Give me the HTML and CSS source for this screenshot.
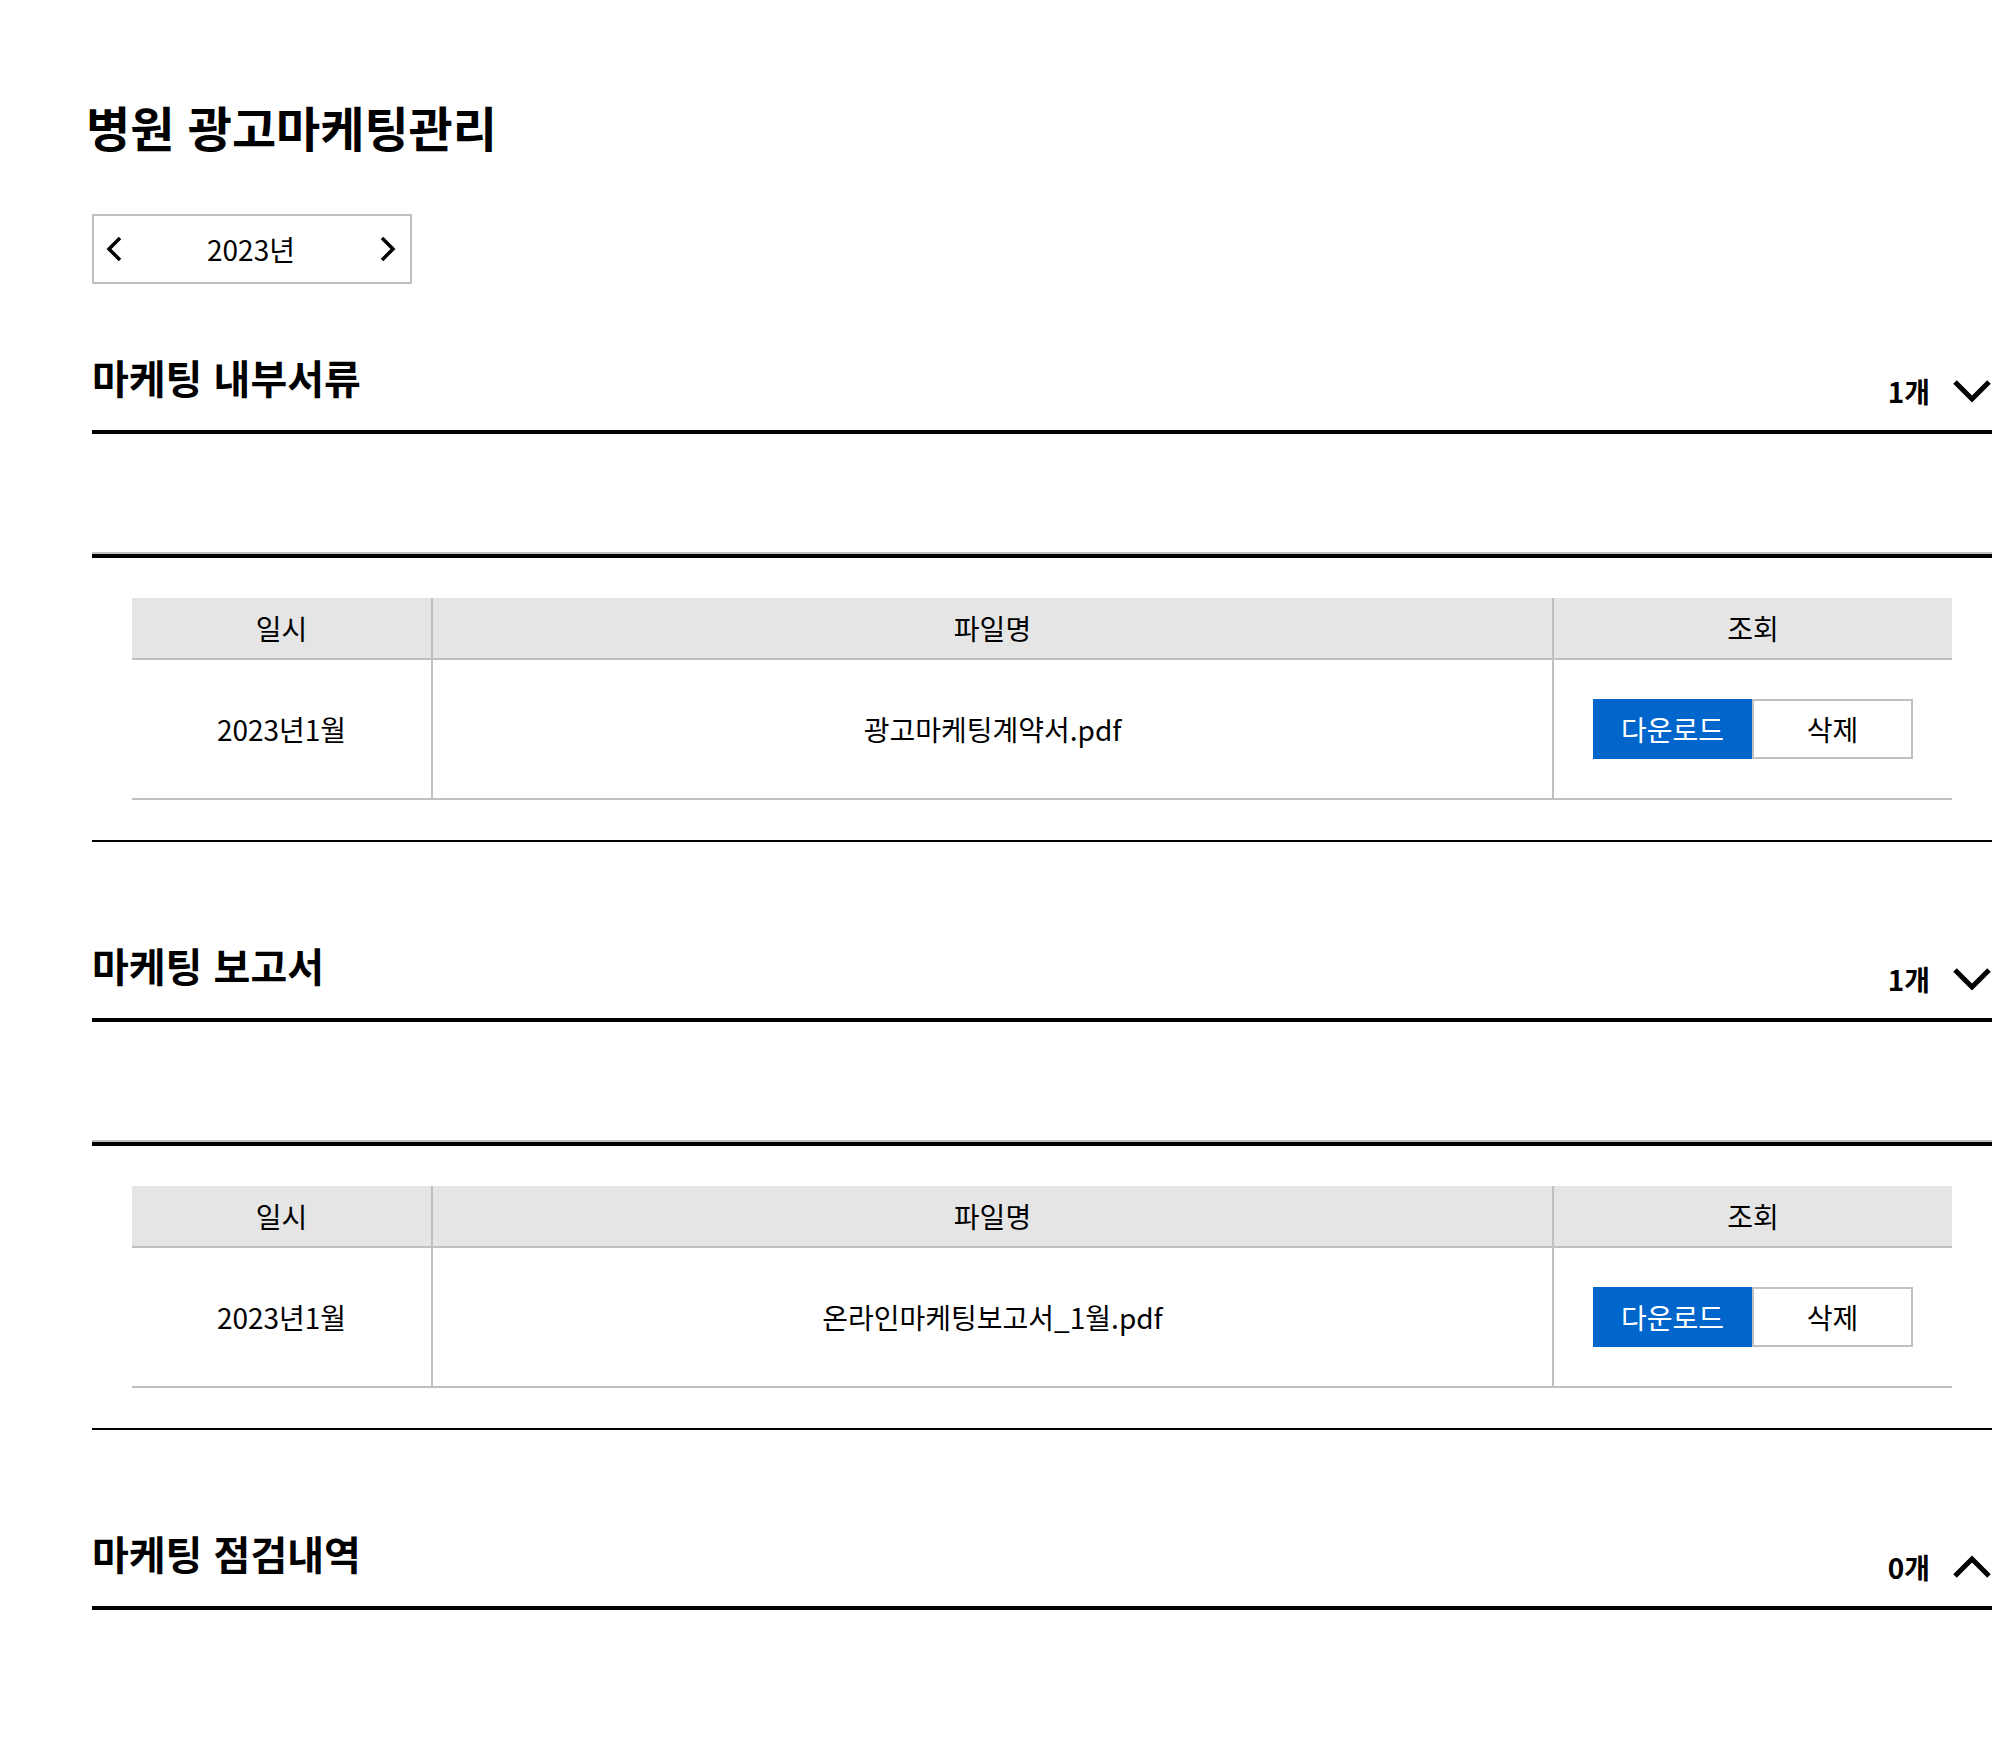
FILE: index.html
```html
<!DOCTYPE html>
<html lang="ko">
<head>
  <meta charset="UTF-8" />
  <meta name="viewport" content="width=device-width, initial-scale=1.0"/>
  <title>병원 광고마케팅관리</title>
  <link rel="stylesheet" href="styles.css">
</head>
<body>
  <div class="page">
    <h1 class="page-title">병원 광고마케팅관리</h1>

    <div class="year-nav">
      <button class="year-arrow" type="button" aria-label="이전 연도">
        <svg width="20" height="26" viewBox="0 0 20 26"><path d="M16 2 L5 13 L16 24" fill="none" stroke="#000" stroke-width="3.5"/></svg>
      </button>
      <span class="year-label">2023년</span>
      <button class="year-arrow" type="button" aria-label="다음 연도">
        <svg width="20" height="26" viewBox="0 0 20 26"><path d="M4 2 L15 13 L4 24" fill="none" stroke="#000" stroke-width="3.5"/></svg>
      </button>
    </div>

    <section class="section">
      <div class="section-head">
        <h2 class="section-title">마케팅 내부서류</h2>
        <div class="section-meta">
          <span class="count">1개</span>
          <svg class="toggle" width="40" height="24" viewBox="0 0 40 24"><path d="M3 3 L20 20 L37 3" fill="none" stroke="#000" stroke-width="5"/></svg>
        </div>
      </div>
      <div class="section-gap"></div>
      <div class="section-body">
        <table class="file-table">
          <colgroup>
            <col class="col-date">
            <col class="col-name">
            <col class="col-action">
          </colgroup>
          <thead>
            <tr><th>일시</th><th>파일명</th><th>조회</th></tr>
          </thead>
          <tbody>
            <tr>
              <td>2023년1월</td>
              <td>광고마케팅계약서.pdf</td>
              <td>
                <div class="btn-group">
                  <button class="btn btn-download" type="button">다운로드</button>
                  <button class="btn btn-delete" type="button">삭제</button>
                </div>
              </td>
            </tr>
          </tbody>
        </table>
      </div>
    </section>

    <section class="section">
      <div class="section-head">
        <h2 class="section-title">마케팅 보고서</h2>
        <div class="section-meta">
          <span class="count">1개</span>
          <svg class="toggle" width="40" height="24" viewBox="0 0 40 24"><path d="M3 3 L20 20 L37 3" fill="none" stroke="#000" stroke-width="5"/></svg>
        </div>
      </div>
      <div class="section-gap"></div>
      <div class="section-body">
        <table class="file-table">
          <colgroup>
            <col class="col-date">
            <col class="col-name">
            <col class="col-action">
          </colgroup>
          <thead>
            <tr><th>일시</th><th>파일명</th><th>조회</th></tr>
          </thead>
          <tbody>
            <tr>
              <td>2023년1월</td>
              <td>온라인마케팅보고서_1월.pdf</td>
              <td>
                <div class="btn-group">
                  <button class="btn btn-download" type="button">다운로드</button>
                  <button class="btn btn-delete" type="button">삭제</button>
                </div>
              </td>
            </tr>
          </tbody>
        </table>
      </div>
    </section>

    <section class="section">
      <div class="section-head">
        <h2 class="section-title">마케팅 점검내역</h2>
        <div class="section-meta">
          <span class="count">0개</span>
          <svg class="toggle" width="40" height="24" viewBox="0 0 40 24"><path d="M3 21 L20 4 L37 21" fill="none" stroke="#000" stroke-width="5"/></svg>
        </div>
      </div>
    </section>
  </div>
</body>
</html>
```

FILE: styles.css
```css
html, body {
  margin: 0;
  padding: 0;
  background: #fff;
  color: #000;
  font-family: "Noto Sans CJK KR", "Noto Sans", sans-serif;
}

.page {
  padding: 102px 0 120px 92px;
  width: 1900px;
}

.page-title {
  margin: 0 0 64px -6px;
  font-size: 48px;
  font-weight: 700;
  line-height: 1;
}

/* year selector */
.year-nav {
  box-sizing: border-box;
  width: 320px;
  height: 70px;
  border: 2px solid #c0c0c0;
  display: flex;
  align-items: center;
  justify-content: space-between;
  padding: 0 12px 0 10px;
  margin-bottom: 70px;
}

.year-arrow {
  border: 0;
  background: none;
  padding: 0;
  display: flex;
  cursor: pointer;
}

.year-label {
  font-size: 28px;
  line-height: 1;
}

/* sections */
.section + .section {
  margin-top: 100px;
}

.section-head {
  height: 76px;
  display: flex;
  justify-content: space-between;
  align-items: flex-end;
  border-bottom: 4px solid #000;
}

.section-title {
  margin: 0 0 33px;
  font-size: 40px;
  font-weight: 700;
  line-height: 1;
}

.section-meta {
  display: flex;
  align-items: center;
  gap: 22px;
  margin-bottom: 25px;
}

.count {
  font-size: 28px;
  font-weight: 700;
  line-height: 1;
}

.toggle {
  display: block;
}

.section-gap {
  height: 118px;
  border-bottom: 2px solid #c0c0c0;
}

.section-body {
  border-top: 4px solid #000;
  border-bottom: 2px solid #000;
  padding: 40px;
}

/* file table */
.file-table {
  width: 100%;
  border-collapse: separate;
  border-spacing: 0;
  table-layout: fixed;
  font-size: 28px;
}

.col-date { width: 299px; }
.col-name { width: 1121px; }
.col-action { width: 400px; }

.file-table th,
.file-table td {
  padding: 0;
  text-align: center;
  border-bottom: 2px solid #c0c0c0;
}

.file-table th + th,
.file-table td + td {
  border-left: 2px solid #c0c0c0;
}

.file-table th {
  height: 60px;
  background: #e5e5e5;
  font-weight: 400;
}

.file-table td {
  height: 138px;
}

.btn-group {
  display: flex;
  justify-content: center;
}

.btn {
  box-sizing: border-box;
  height: 60px;
  font-family: inherit;
  font-size: 28px;
  padding: 0;
  cursor: pointer;
}

.btn-download {
  width: 159px;
  background: #0066cc;
  color: #fff;
  border: 0;
}

.btn-delete {
  width: 161px;
  background: #fff;
  color: #000;
  border: 2px solid #c0c0c0;
}
```
